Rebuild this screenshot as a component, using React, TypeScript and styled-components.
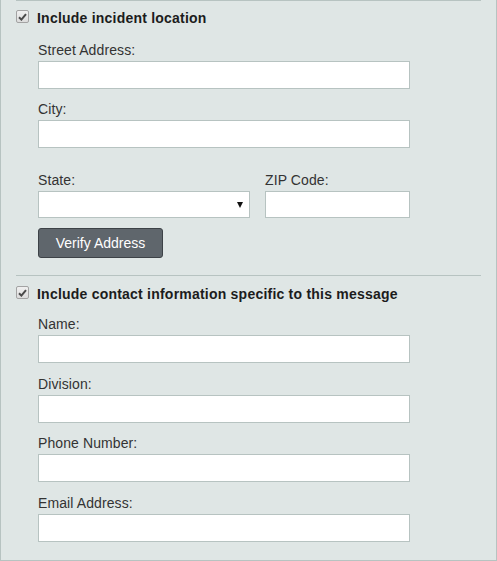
import React from "react";
import styled, { createGlobalStyle } from "styled-components";

const Global = createGlobalStyle`
  html, body { margin: 0; padding: 0; background: #ffffff; }
  body { font-family: "Liberation Sans", Arial, sans-serif; }
  * { box-sizing: border-box; }
`;

const Panel = styled.div`
  width: 497px;
  background: #dfe6e5;
  border: 1px solid #b7c3c1;
  border-top: none;
  padding: 0 15px 18px 15px;
`;

const Section = styled.section<{ $top: number; $bottom?: number }>`
  border-top: 1px solid #b7c3c1;
  padding-top: ${(p) => p.$top}px;
  padding-bottom: ${(p) => p.$bottom ?? 0}px;
`;

const Header = styled.label`
  display: flex;
  align-items: flex-start;
  gap: 8px;
  font-size: 14px;
  line-height: 16px;
  font-weight: bold;
  color: #1c1c1c;
  letter-spacing: 0.22px;
`;

const Check = styled.span`
  display: inline-flex;
  align-items: center;
  justify-content: center;
  width: 13px;
  height: 13px;
  border: 1px solid #a3a3a3;
  border-radius: 2px;
  background: linear-gradient(#f0f0f0, #dcdcdc);
  flex: none;
`;

const Fields = styled.div`
  padding-left: 22px;
`;

const Field = styled.div<{ $top: number; $width?: number }>`
  margin-top: ${(p) => p.$top}px;
  width: ${(p) => p.$width ?? 372}px;
`;

const Row = styled.div<{ $top: number }>`
  display: flex;
  gap: 15px;
  margin-top: ${(p) => p.$top}px;
`;

const Label = styled.label`
  display: block;
  font-size: 14px;
  line-height: 16px;
  color: #333333;
  margin-bottom: 3px;
  letter-spacing: 0.1px;
`;

const Input = styled.input<{ $h?: number }>`
  display: block;
  width: 100%;
  height: ${(p) => p.$h ?? 28}px;
  margin: 0;
  border: 1px solid #b7c3c1;
  background: #ffffff;
  font-family: inherit;
  font-size: 14px;
  padding: 0 6px;
  outline: none;
`;

const SelectWrap = styled.div`
  position: relative;
`;

const Select = styled.select`
  display: block;
  width: 100%;
  height: 27px;
  margin: 0;
  border: 1px solid #b7c3c1;
  border-radius: 0;
  background: #ffffff;
  appearance: none;
  -webkit-appearance: none;
  font-family: inherit;
  font-size: 14px;
  padding: 0 6px;
  outline: none;
`;

const Arrow = styled.span`
  position: absolute;
  right: 7px;
  top: 11px;
  width: 0;
  height: 0;
  border-left: 3.5px solid transparent;
  border-right: 3.5px solid transparent;
  border-top: 6px solid #111111;
  pointer-events: none;
`;

const Button = styled.button`
  display: block;
  margin-top: 10px;
  width: 125px;
  height: 30px;
  padding: 0;
  background: #5f666c;
  border: 1px solid #3d4247;
  border-radius: 3px;
  color: #ffffff;
  font-family: inherit;
  font-size: 14px;
  line-height: 28px;
  text-align: center;
  cursor: pointer;
`;

const CheckBox = () => (
  <Check>
    <svg width="9" height="8" viewBox="0 0 9 8">
      <path d="M1 4.2 L3.4 6.6 L8 1.2" fill="none" stroke="#4a4a4a" strokeWidth="2" />
    </svg>
  </Check>
);

const TextField = ({ label, top }: { label: string; top: number }) => (
  <Field $top={top}>
    <Label>{label}</Label>
    <Input type="text" />
  </Field>
);

export default function App() {
  return (
    <>
      <Global />
      <Panel>
        <Section $top={9} $bottom={17}>
          <Header>
            <CheckBox />
            Include incident location
          </Header>
          <Fields>
            <TextField label="Street Address:" top={16} />
            <TextField label="City:" top={12} />
            <Row $top={24}>
              <Field $top={0} $width={212}>
                <Label>State:</Label>
                <SelectWrap>
                  <Select defaultValue="">
                    <option value=""></option>
                  </Select>
                  <Arrow />
                </SelectWrap>
              </Field>
              <Field $top={0} $width={145}>
                <Label>ZIP Code:</Label>
                <Input type="text" $h={27} />
              </Field>
            </Row>
            <Button type="button">Verify Address</Button>
          </Fields>
        </Section>
        <Section $top={10}>
          <Header>
            <CheckBox />
            Include contact information specific to this message
          </Header>
          <Fields>
            <TextField label="Name:" top={14} />
            <TextField label="Division:" top={13} />
            <TextField label="Phone Number:" top={12} />
            <TextField label="Email Address:" top={13} />
          </Fields>
        </Section>
      </Panel>
    </>
  );
}
